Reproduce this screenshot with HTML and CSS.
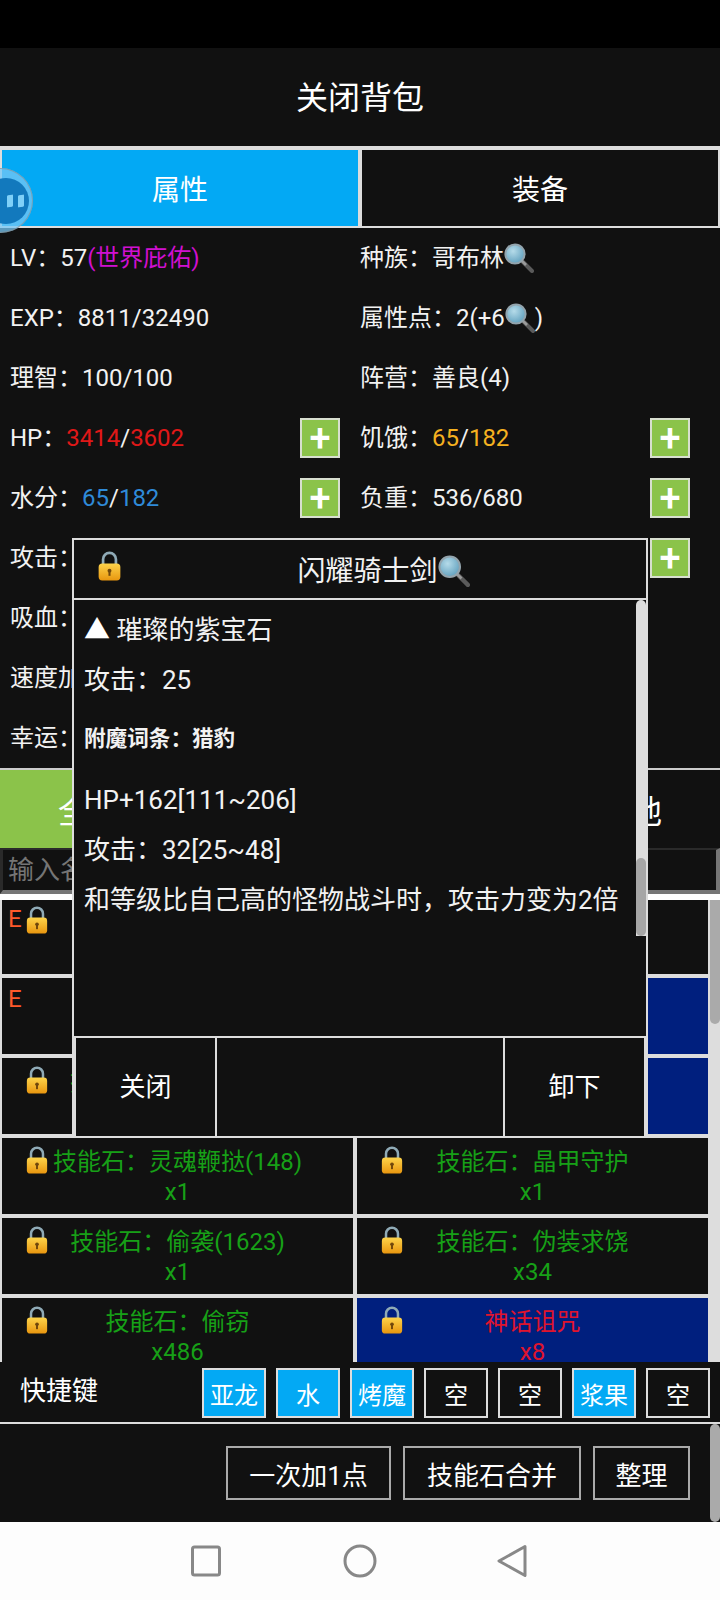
FILE: index.html
```html
<!DOCTYPE html>
<html lang="zh-CN">
<head>
<meta charset="utf-8">
<title>关闭背包</title>
<link rel="stylesheet" href="styles.css">
</head>
<body>
<svg class="defs" aria-hidden="true">
  <defs>
    <linearGradient id="gold" x1="0" y1="0" x2="0" y2="1"><stop offset="0" stop-color="#fdd34a"/><stop offset="1" stop-color="#e8960f"/></linearGradient>
    <radialGradient id="glass" cx="0.4" cy="0.35" r="0.7"><stop offset="0" stop-color="#b5dbe9"/><stop offset="1" stop-color="#5f9fbd"/></radialGradient>
    <symbol id="lock" viewBox="0 0 22 29">
      <path d="M4.8 14V8a6.2 6.2 0 0 1 12.4 0v6" fill="none" stroke="#8faab6" stroke-width="2.6"/>
      <rect x="0.5" y="12" width="21" height="16.5" rx="3.5" fill="url(#gold)"/>
      <circle cx="11" cy="19" r="1.9" fill="#70470c"/>
      <rect x="10" y="19" width="2" height="5" fill="#70470c"/>
    </symbol>
    <symbol id="glassicon" viewBox="0 0 30 30">
      <path d="M19 19L28 28" stroke="#5a5a5a" stroke-width="4" stroke-linecap="round"/>
      <path d="M18 18L22 22" stroke="#9a9a9a" stroke-width="2.6"/>
      <circle cx="11" cy="11" r="9.6" fill="url(#glass)" stroke="#93a4ad" stroke-width="2"/>
    </symbol>
  </defs>
</svg>

<div class="page">
  <div class="statusbar"></div>
  <div class="titlebar">关闭背包</div>

  <div class="tabs">
    <div class="tab tab-on">属性</div>
    <div class="tab">装备</div>
  </div>

  <div class="stats">
    <div class="stat"><span>LV&#xFF1A;57<span class="magenta">(世界庇佑)</span></span></div>
    <div class="stat stat-r"><span>种族&#xFF1A;哥布林</span><svg class="mag"><use href="#glassicon"/></svg></div>
    <div class="stat"><span>EXP&#xFF1A;8811/32490</span></div>
    <div class="stat stat-r"><span>属性点&#xFF1A;2(+6</span><svg class="mag"><use href="#glassicon"/></svg><span>)</span></div>
    <div class="stat"><span>理智&#xFF1A;100/100</span></div>
    <div class="stat stat-r"><span>阵营&#xFF1A;善良(4)</span></div>
    <div class="stat"><span>HP&#xFF1A;<span class="red">3414</span>/<span class="red">3602</span></span><span class="plus">+</span></div>
    <div class="stat stat-r"><span>饥饿&#xFF1A;<span class="amber">65</span>/<span class="amber">182</span></span><span class="plus">+</span></div>
    <div class="stat"><span>水分&#xFF1A;<span class="blue">65</span>/<span class="blue">182</span></span><span class="plus">+</span></div>
    <div class="stat stat-r"><span>负重&#xFF1A;536/680</span><span class="plus">+</span></div>
    <div class="stat"><span>攻击&#xFF1A;</span></div>
    <div class="stat stat-r"><span class="plus">+</span></div>
    <div class="stat"><span>吸血&#xFF1A;</span></div>
    <div class="stat stat-r"></div>
    <div class="stat"><span>速度加成</span></div>
    <div class="stat stat-r"></div>
    <div class="stat"><span>幸运&#xFF1A;</span></div>
    <div class="stat stat-r"></div>
  </div>

  <div class="filters">
    <div class="filter filter-on">全部</div>
    <div class="filter"></div>
    <div class="filter"></div>
    <div class="filter">其他</div>
  </div>

  <input class="search" type="text" placeholder="输入名称">
  <div class="band"></div>

  <div class="list">
    <div class="grid">
      <div class="item"><span class="grade">E</span><svg class="lock"><use href="#lock"/></svg></div>
      <div class="item"></div>
      <div class="item"><span class="grade">E</span></div>
      <div class="item item-blue"></div>
      <div class="item green item-hidden"><svg class="lock"><use href="#lock"/></svg>技能石</div>
      <div class="item item-blue"></div>
      <div class="item green"><svg class="lock"><use href="#lock"/></svg>技能石&#xFF1A;灵魂鞭挞(148)<br>x1</div>
      <div class="item green"><svg class="lock"><use href="#lock"/></svg>技能石&#xFF1A;晶甲守护<br>x1</div>
      <div class="item green"><svg class="lock"><use href="#lock"/></svg>技能石&#xFF1A;偷袭(1623)<br>x1</div>
      <div class="item green"><svg class="lock"><use href="#lock"/></svg>技能石&#xFF1A;伪装求饶<br>x34</div>
      <div class="item green"><svg class="lock"><use href="#lock"/></svg>技能石&#xFF1A;偷窃<br>x486</div>
      <div class="item item-blue crimson"><svg class="lock"><use href="#lock"/></svg>神话诅咒<br>x8</div>
    </div>
    <div class="list-thumb"></div>
  </div>

  <div class="shortcuts">
    <div class="shortcut-label">快捷键</div>
    <div class="shortcut-row">
      <div class="key key-on">亚龙</div>
      <div class="key key-on">水</div>
      <div class="key key-on">烤魔</div>
      <div class="key">空</div>
      <div class="key">空</div>
      <div class="key key-on">浆果</div>
      <div class="key">空</div>
    </div>
  </div>

  <div class="toolbar">
    <div class="tool tool-add">一次加1点</div>
    <div class="tool tool-merge">技能石合并</div>
    <div class="tool tool-sort">整理</div>
    <div class="toolbar-thumb"></div>
  </div>

  <div class="navbar">
    <svg class="nav-icon" viewBox="0 0 34 34"><rect x="3.5" y="3" width="27" height="28" rx="2" fill="none" stroke="#888" stroke-width="3"/></svg>
    <svg class="nav-icon" viewBox="0 0 34 34"><circle cx="17" cy="17" r="15" fill="none" stroke="#888" stroke-width="3"/></svg>
    <svg class="nav-icon" viewBox="0 0 34 34"><path d="M28 2.5L2 17L28 31.5Z" fill="none" stroke="#888" stroke-width="3" stroke-linejoin="round"/></svg>
  </div>

  <div class="float-btn">
    <div class="float-core"><span class="float-bar"></span><span class="float-bar"></span></div>
  </div>

  <div class="modal">
    <div class="modal-head">
      <svg class="modal-lock"><use href="#lock"/></svg>
      <div class="modal-title"><span>闪耀骑士剑</span><svg class="modal-mag"><use href="#glassicon"/></svg></div>
    </div>
    <div class="modal-body">
      <p class="line"><span class="tri">▲</span> 璀璨的紫宝石</p>
      <p class="line">攻击&#xFF1A;25</p>
      <p class="line line-bold">附魔词条&#xFF1A;猎豹</p>
      <p class="line">HP+162[111~206]</p>
      <p class="line">攻击&#xFF1A;32[25~48]</p>
      <p class="line">和等级比自己高的怪物战斗时&#xFF0C;攻击力变为2倍</p>
      <div class="modal-track"><div class="modal-thumb"></div></div>
    </div>
    <div class="modal-foot">
      <div class="foot-btn">关闭</div>
      <div class="foot-btn"></div>
      <div class="foot-btn">卸下</div>
    </div>
  </div>
</div>
</body>
</html>
```
FILE: styles.css
```css
* { box-sizing: border-box; }
html, body { margin: 0; padding: 0; background: #111; }
body {
  font-family: Roboto, "Noto Sans CJK SC", sans-serif;
  color: #f2f2f2;
  font-size: 24px;
}
.defs { position: absolute; width: 0; height: 0; }
.page { position: relative; width: 720px; height: 1600px; overflow: hidden; background: #111; }

.statusbar { height: 48px; background: #000; }
.titlebar { height: 98px; display: flex; align-items: center; justify-content: center; padding-bottom: 4px; font-size: 32px; color: #fff; }

.tabs { height: 82px; display: flex; gap: 4px; padding: 4px 2px 2px; background: #ddd; }
.tab { flex: 1; display: flex; align-items: center; justify-content: center; background: #111; font-size: 28px; color: #fff; }
.tab-on { background: #03a9f4; }

.stats { height: 540px; display: grid; grid-template-columns: 360px 360px; grid-auto-rows: 60px; }
.stat { display: flex; align-items: center; padding: 0 20px 0 10px; white-space: nowrap; overflow: hidden; line-height: 30px; }
.stat-r { padding: 0 30px 0 0; }
.magenta { color: #d010d0; }
.red { color: #e01818; }
.amber { color: #f5b120; }
.blue { color: #2f8ad8; }
.mag { width: 30px; height: 30px; flex: none; }
.plus {
  margin-left: auto;
  width: 40px; height: 40px; flex: none;
  display: flex; align-items: center; justify-content: center;
  background: #8bc34a;
  border: 2px solid #d8dfd0;
  color: #fff;
  font-size: 38px; font-weight: 500; line-height: 1;
}

.filters { height: 80px; display: flex; border-top: 2px solid #ccc; }
.filter { flex: 1; display: flex; align-items: center; justify-content: center; font-size: 32px; color: #fff; }
.filter-on { background: #8bc34a; }

.search {
  display: block; width: 720px; height: 46px; margin: 0;
  background: #111; color: #fff;
  font: 26px Roboto, "Noto Sans CJK SC", sans-serif;
  padding: 0 0 0 5px;
  border-style: solid; border-width: 2px 4px 4px 3px;
  border-color: #2a2a2a #767676 #767676 #2a2a2a;
  outline: none;
}
.search::placeholder { color: #757575; opacity: 1; }
.band { height: 6px; background: #fff; }

.list { position: relative; height: 462px; overflow: hidden; background: #ddd; }
.grid { display: grid; grid-template-columns: 351px 351px; grid-auto-rows: 76px; gap: 4px; padding-left: 2px; margin-top: -2px; }
.item { position: relative; background: #111; text-align: center; padding-top: 9px; line-height: 30px; overflow: hidden; white-space: nowrap; }
.item-blue { background: #001f7e; }
.item-hidden { text-align: left; padding-left: 68px; }
.green { color: #17a017; }
.crimson { color: #e0142d; }
.grade { position: absolute; left: 6px; top: 6px; color: #ff5a2b; }
.lock { position: absolute; left: 24px; top: 8px; width: 22px; height: 28px; }
.list-thumb { position: absolute; right: 0; top: 0; width: 10px; height: 124px; background: #aaa; border-radius: 0 0 5px 5px; }

.shortcuts { height: 62px; display: flex; border-bottom: 2px solid #ddd; }
.shortcut-label { width: 202px; padding: 13px 0 0 20px; font-size: 26px; line-height: 32px; color: #fff; }
.shortcut-row { display: flex; gap: 10px; padding-top: 6px; align-items: flex-start; }
.key { width: 64px; height: 50px; display: flex; align-items: center; justify-content: center; border: 2px solid #ddd; color: #fff; }
.key-on { background: #03a9f4; }

.toolbar { position: relative; height: 98px; display: flex; justify-content: flex-end; align-items: flex-start; gap: 12px; padding: 22px 30px 0 0; }
.tool { height: 54px; display: flex; align-items: center; justify-content: center; border: 2px solid #aaa; font-size: 26px; color: #fff; }
.tool-add { width: 165px; }
.tool-merge { width: 178px; }
.tool-sort { width: 97px; }
.toolbar-thumb { position: absolute; right: 0; top: 0; width: 10px; height: 98px; background: #aaa; border-radius: 5px; }

.navbar { height: 78px; background: #fdfdfd; display: flex; justify-content: center; align-items: center; gap: 120px; padding-bottom: 1px; }
.nav-icon { width: 34px; height: 34px; }

.float-btn {
  position: absolute; left: -32px; top: 168px;
  width: 65px; height: 65px; border-radius: 50%;
  background: rgba(120, 200, 245, 0.75);
  box-shadow: inset 0 0 0 1px rgba(140, 140, 140, 0.6);
  display: flex; align-items: center; justify-content: flex-end; padding-right: 4px;
}
.float-core {
  width: 46px; height: 46px; border-radius: 50%;
  background: #1279bd;
  display: flex; align-items: center; justify-content: flex-end; gap: 5px; padding-right: 5px;
}
.float-bar { width: 6px; height: 12px; background: #7fd0f8; border-radius: 1px; transform: skewY(-10deg); }

.modal {
  position: absolute; left: 72px; top: 538px;
  width: 576px; height: 600px;
  background: #111; border: 2px solid #ddd;
  display: flex; flex-direction: column;
}
.modal-head { height: 60px; flex: none; display: flex; align-items: center; border-bottom: 2px solid #ddd; padding-left: 24px; }
.modal-lock { width: 23px; height: 30px; flex: none; margin-top: -6px; }
.modal-title { flex: 1; display: flex; align-items: center; justify-content: center; font-size: 28px; color: #f2f2f2; }
.modal-mag { width: 32px; height: 32px; flex: none; margin-top: 4px; }
.modal-body { position: relative; height: 436px; flex: none; padding: 5px 0 0 10px; }
.line { margin: 0; font-size: 26px; line-height: 50px; color: #f2f2f2; white-space: nowrap; }
.tri { color: #fff; }
.line-bold { font-size: 21.6px; font-weight: 700; margin: 9px 0 11px; }
.modal-track { position: absolute; right: 0; top: 0; width: 10px; height: 336px; background: #ddd; border-radius: 5px 5px 0 0; }
.modal-thumb { position: absolute; left: 0; bottom: 0; width: 10px; height: 78px; background: #a6a6a6; border-radius: 5px; }
.modal-foot { height: 100px; flex: none; display: flex; gap: 2px; padding: 2px 2px 0; background: #ddd; }
.foot-btn { display: flex; align-items: center; justify-content: center; background: #111; font-size: 26px; color: #fff; flex: 1; padding-bottom: 6px; }
.foot-btn:first-child { flex: none; width: 139px; }
.foot-btn:last-child { flex: none; width: 139px; }
```
